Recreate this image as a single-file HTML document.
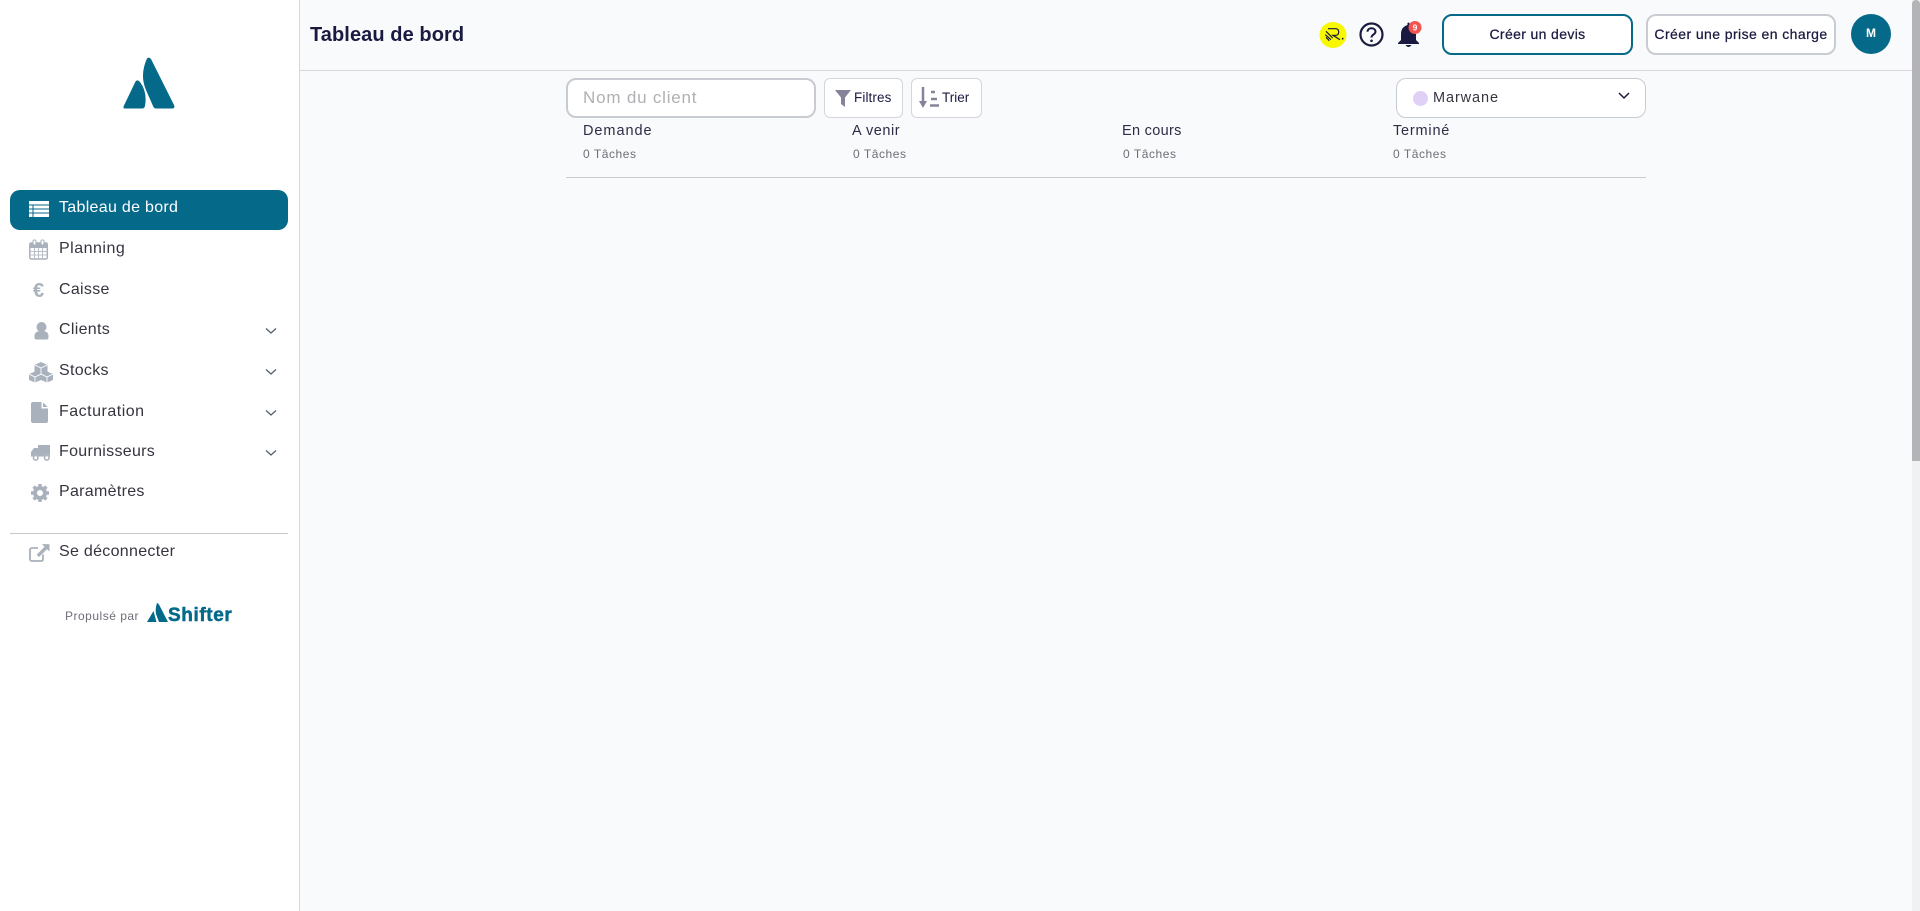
<!DOCTYPE html>
<html lang="fr">
<head>
<meta charset="utf-8">
<title>Tableau de bord</title>
<style>
html,body{margin:0;padding:0;width:1920px;height:911px;overflow:hidden;background:#f9fafc;font-family:"Liberation Sans",sans-serif;color:#1a1a40}
.abs{position:absolute}
.t{position:absolute;white-space:nowrap;line-height:20px}
#side{position:absolute;left:0;top:0;width:299px;height:911px;background:#fff;border-right:1px solid #d8d8dc}
#active{position:absolute;left:10px;top:190px;width:278px;height:40px;background:#05698a;border-radius:10px}
.nav{font-size:16px;color:#37343f;left:59px;letter-spacing:.3px}
svg{position:absolute;overflow:visible}
.btn{position:absolute;box-sizing:border-box;background:#fff;border-radius:8px;text-align:center;font-size:14px;color:#1a1a40;white-space:nowrap;-webkit-text-stroke:.25px #1a1a40}
.col{font-size:14.500px;color:#2e2c46;letter-spacing:.3px;top:121px}
.sub{font-size:12px;color:#6e6e78;letter-spacing:.55px;top:144px}
</style>
</head>
<body>
<div id="side">
<svg style="left:0;top:0" width="299" height="120"><path fill="#05698a" d="M147 58.500Q149 56.500 151 59L174 105Q175.500 108.500 172 108.500H156Q154 108.500 153 106L146 90Q139.500 75 147 58.500ZM135.500 81.500Q137.500 79 140 82Q147.500 92 145 106Q144.500 108.500 142 108.500H125Q122.500 108.500 124 105.500Z"/></svg>
<div id="active"></div>
<div class="t nav" style="top:198px;color:#fff">Tableau de bord</div>
<div class="t nav" style="top:239px;letter-spacing:.5px">Planning</div>
<div class="t nav" style="top:280px">Caisse</div>
<div class="t nav" style="top:320px">Clients</div>
<div class="t nav" style="top:361px">Stocks</div>
<div class="t nav" style="top:402px;letter-spacing:.5px">Facturation</div>
<div class="t nav" style="top:442px">Fournisseurs</div>
<div class="t nav" style="top:482px">Paramètres</div>
<div class="t nav" style="top:542px">Se déconnecter</div>
<svg style="left:29px;top:201px" width="20" height="16"><path fill="#fff" d="M0 0H20V3.500H0ZM0 4.500H3.500V7.500H0ZM4.500 4.500H20V7.500H4.500ZM0 8.500H3.500V11.500H0ZM4.500 8.500H20V11.500H4.500ZM0 12.500H3.500V16H0ZM4.500 12.500H20V16H4.500Z"/></svg>
<svg style="left:29px;top:240px" width="20" height="20"><rect x=".8" y="3" width="17.500" height="16" rx="1.500" fill="none" stroke="#a9b1bc" stroke-width="1.500"/><path fill="#a9b1bc" d="M1 3H18V8H1Z"/><path stroke="#b9c0c9" stroke-width="1" fill="none" d="M1 11.500H18M1 15H18M5.500 8V19M9.500 8V19M13.500 8V19"/><rect x="4" y="0" width="3" height="5" rx="1.200" fill="#fff" stroke="#a9b1bc"/><rect x="12" y="0" width="3" height="5" rx="1.200" fill="#fff" stroke="#a9b1bc"/></svg>
<div class="t" style="left:33px;top:281px;font-size:20px;font-weight:700;color:#a9b1bc">€</div>
<svg style="left:34px;top:322px" width="16" height="18"><circle cx="7.500" cy="5" r="5" fill="#a9b1bc"/><path fill="#a9b1bc" d="M.5 14C.5 10.500 3 9 7.500 9S14.500 10.500 14.500 14V15.500Q14.500 17.500 12.500 17.500H2.500Q.5 17.500 .5 15.500Z"/></svg>
<svg style="left:29px;top:362px" width="24" height="20"><path fill="#a9b1bc" d="M12 0 18.500 3V9.500L12 12.500 5.500 9.500V3ZM6 9.500 12 12.300V18L6 20.500 0 18V12ZM18 9.500 24 12V18L18 20.500 12 18V12.300Z"/><path fill="none" stroke="#fff" stroke-width=".9" d="M5.800 3 12 6 18.200 3M12 6V12.500M.3 12.200 6 15 11.800 12.200M6 15V20.500M12.300 12.200 18 15 23.700 12.200M18 15V20.500"/></svg>
<svg style="left:31px;top:402px" width="17" height="21"><path fill="#a9b1bc" d="M2 0H10.500V6.500H17V19Q17 21 15 21H2Q0 21 0 19V2Q0 0 2 0ZM12 .5 16.800 5H12Z"/></svg>
<svg style="left:31px;top:445px" width="20" height="16"><path fill="#a9b1bc" d="M7 0H19V11.500H18.600A3 3 0 0 0 13 11.500H7.500A3 3 0 0 0 2 11.500H0V7L3 3H7Z"/><circle cx="4.700" cy="12.800" r="2.300" fill="none" stroke="#a9b1bc" stroke-width="1.500"/><circle cx="15.800" cy="12.800" r="2.300" fill="none" stroke="#a9b1bc" stroke-width="1.500"/></svg>
<svg style="left:31px;top:484px" width="18" height="18"><circle cx="9" cy="9" r="5" fill="none" stroke="#a9b1bc" stroke-width="4"/><path stroke="#a9b1bc" stroke-width="3.400" d="M9 0V3.500M9 14.500V18M0 9H3.500M14.500 9H18M2.600 2.600 5.100 5.100M12.900 12.900 15.400 15.400M2.600 15.400 5.100 12.900M12.900 5.100 15.400 2.600"/></svg>
<div class="abs" style="left:10px;top:533px;width:278px;height:1px;background:#c8c8cc"></div>
<svg style="left:29px;top:544px" width="21" height="18"><path fill="none" stroke="#a9b1bc" stroke-width="1.800" d="M14 10.500V15Q14 17 12 17H3Q1 17 1 15V6Q1 4 3 4H9"/><path fill="#a9b1bc" d="M13 0 20.500 .2V7.500L18 5.200 10 13 7.700 10.800 15.500 2.800Z"/></svg>
<svg style="left:265px;top:327px" width="12" height="8"><path fill="none" stroke="#55606e" stroke-width="1.300" d="M1 1.500 6 6 11 1.500"/></svg>
<svg style="left:265px;top:368px" width="12" height="8"><path fill="none" stroke="#55606e" stroke-width="1.300" d="M1 1.500 6 6 11 1.500"/></svg>
<svg style="left:265px;top:409px" width="12" height="8"><path fill="none" stroke="#55606e" stroke-width="1.300" d="M1 1.500 6 6 11 1.500"/></svg>
<svg style="left:265px;top:449px" width="12" height="8"><path fill="none" stroke="#55606e" stroke-width="1.300" d="M1 1.500 6 6 11 1.500"/></svg>
<div class="t" style="left:65px;top:606px;font-size:12px;color:#6e6e78;letter-spacing:.5px">Propulsé par</div>
<svg style="left:147px;top:603px" width="22" height="20"><path fill="#05698a" d="M10 0Q11 0 12 1.500L21 19H12L9 11Q8 6 10 0ZM6.500 8 9.500 19H0Z"/></svg>
<div class="t" style="left:168px;top:606px;font-size:19px;font-weight:700;color:#05698a;letter-spacing:.6px;-webkit-text-stroke:.5px #05698a">Shifter</div>
</div>

<div class="abs" style="left:300px;top:70px;width:1612px;height:1px;background:#d8d8dc"></div>
<div class="t" style="left:310px;top:25px;font-size:20px;font-weight:700;color:#1a1a40;letter-spacing:.08px">Tableau de bord</div>

<svg style="left:1318px;top:21px" width="28" height="28"><ellipse cx="15" cy="14" rx="13.500" ry="13" fill="#f8f800"/><path fill="none" stroke="#1a1a40" stroke-width="1.200" d="M10 7.700H18Q20.700 8 20.700 11T18 14.300H15L22 18.700M8 10.300 14.700 17M7.300 13.700 13 18.700M8 16.300 11.300 19.700"/><circle cx="24.700" cy="17.700" r=".9" fill="#1a1a40"/></svg>
<svg style="left:1359px;top:22px" width="25" height="25"><circle cx="12.500" cy="12.500" r="11" fill="none" stroke="#1a1a40" stroke-width="2.200"/><path fill="none" stroke="#1a1a40" stroke-width="2" d="M8.500 9.800C8.500 5 16.500 5 16.500 9.800 16.500 12.500 12.500 12.500 12.500 15.500"/><circle cx="12.500" cy="18.800" r="1.300" fill="#1a1a40"/></svg>
<svg style="left:1397px;top:22px" width="28" height="26"><path fill="#1a1a40" d="M10.500 1Q11.500 0 12.500 1V3Q19 5 19 12V18L22 21V22H1V21L4 18V12Q4 5 10.500 3ZM8.500 23H14.500Q11.500 27 8.500 23Z"/><circle cx="18" cy="5.500" r="6.500" fill="#f4544e"/><text x="18" y="8.500" font-size="8.500" font-weight="700" fill="#fff" text-anchor="middle" font-family="Liberation Sans">9</text></svg>

<div class="btn" style="left:1442px;top:14px;width:191px;height:41px;border:2px solid #05698a;border-radius:10px;line-height:37px;letter-spacing:.36px">Créer un devis</div>
<div class="btn" style="left:1646px;top:14px;width:190px;height:41px;border:2px solid #c9cbd2;border-radius:10px;line-height:37px;letter-spacing:.42px">Créer une prise en charge</div>
<div class="abs" style="left:1851px;top:14px;width:40px;height:40px;border-radius:50%;background:#05698a;color:#fff;font-size:12px;font-weight:700;text-align:center;line-height:38px">M</div>

<div class="abs" style="left:566px;top:78px;width:250px;height:40px;box-sizing:border-box;background:#fff;border:2px solid #c9cbd2;border-radius:10px"></div>
<div class="t" style="left:583px;top:88px;font-size:17px;color:#b0b0b4;letter-spacing:.8px">Nom du client</div>

<div class="abs" style="left:824px;top:78px;width:79px;height:40px;box-sizing:border-box;background:#fff;border:1px solid #d4d6dc;border-radius:6px"></div>
<svg style="left:835px;top:90px" width="16" height="18"><path fill="#85839a" d="M0 0H16L10 7.500V17L6 14V7.500Z"/></svg>
<div class="t" style="left:854px;top:88px;font-size:13.500px;color:#1a1a40;letter-spacing:.1px">Filtres</div>

<div class="abs" style="left:911px;top:78px;width:71px;height:40px;box-sizing:border-box;background:#fff;border:1px solid #d4d6dc;border-radius:6px"></div>
<svg style="left:919px;top:87px" width="20" height="22"><path fill="none" stroke="#85839a" stroke-width="2.500" d="M4 0V17"/><path fill="#85839a" d="M0 14H8L4 21Z"/><path stroke="#85839a" stroke-width="2.500" d="M12 5H16M12 12H18M11 18.500H20"/></svg>
<div class="t" style="left:942px;top:88px;font-size:13.500px;color:#1a1a40">Trier</div>

<div class="abs" style="left:1396px;top:78px;width:250px;height:40px;box-sizing:border-box;background:#fff;border:1px solid #c9cbd2;border-radius:10px"></div>
<div class="abs" style="left:1413px;top:91px;width:15px;height:15px;border-radius:50%;background:#e0cff7"></div>
<div class="t" style="left:1433px;top:88px;font-size:14.500px;color:#37343f;letter-spacing:.9px">Marwane</div>
<svg style="left:1618px;top:92px" width="12" height="8"><path fill="none" stroke="#1a1a40" stroke-width="1.500" d="M1 1 6 6 11 1"/></svg>

<div class="t col" style="left:583px;letter-spacing:.95px">Demande</div>
<div class="t col" style="left:852px;letter-spacing:.55px">A venir</div>
<div class="t col" style="left:1122px">En cours</div>
<div class="t col" style="left:1393px;letter-spacing:.8px">Terminé</div>
<div class="t sub" style="left:583px">0 Tâches</div>
<div class="t sub" style="left:853px">0 Tâches</div>
<div class="t sub" style="left:1123px">0 Tâches</div>
<div class="t sub" style="left:1393px">0 Tâches</div>
<div class="abs" style="left:566px;top:177px;width:1080px;height:1px;background:#c9cbd2"></div>

<div class="abs" style="left:1912px;top:0;width:8px;height:911px;background:#f1f1f1"></div>
<div class="abs" style="left:1912px;top:0;width:8px;height:461px;background:#b4b4b8;border-radius:4px 4px 0 0"></div>
</body>
</html>
